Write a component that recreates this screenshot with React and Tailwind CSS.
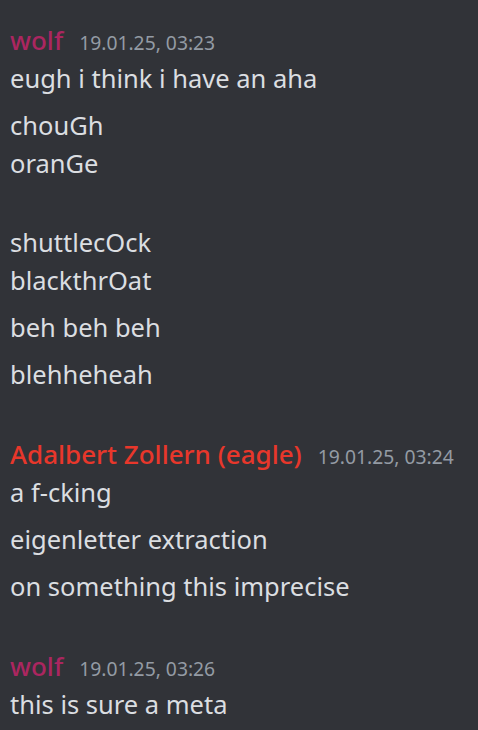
const wolf = "text-[#ab2660]";
const eagle = "text-[#e8372b]";

const groups = [
  {
    name: "wolf",
    color: wolf,
    time: "19.01.25, 03:23",
    messages: [
      ["eugh i think i have an aha"],
      ["chouGh", "oranGe", ""],
      ["shuttlecOck", "blackthrOat"],
      ["beh beh beh"],
      ["blehheheah"],
    ],
  },
  {
    name: "Adalbert Zollern (eagle)",
    color: eagle,
    time: "19.01.25, 03:24",
    messages: [["a f-cking"], ["eigenletter extraction"], ["on something this imprecise"]],
  },
  {
    name: "wolf",
    color: wolf,
    time: "19.01.25, 03:26",
    messages: [["this is sure a meta"]],
  },
];

function Group({ group }) {
  return (
    <div className="mt-[33px] first:mt-0">
      {group.messages.map((lines, i) => (
        <div key={i} className="pt-[5px] pb-[4px] px-[10px]">
          {i === 0 && (
            <div className="flex items-baseline gap-[16px] h-[38px] leading-[38px]">
              <span className={`text-[26px] font-medium ${group.color}`}>{group.name}</span>
              <span className="text-[19.3px] text-[#949ba4]">{group.time}</span>
            </div>
          )}
          {lines.map((line, j) =>
            line === "" ? (
              <div key={j} className="h-[32px]" />
            ) : (
              <div key={j} className="text-[25.5px] leading-[38px] text-[#dbdee1]">
                {line}
              </div>
            )
          )}
        </div>
      ))}
    </div>
  );
}

export default function App() {
  return (
    <div
      className="min-h-[730px] w-full bg-[#313338] pt-[16px] overflow-hidden"
      style={{ fontFamily: '"Noto Sans", sans-serif' }}
    >
      {groups.map((group, i) => (
        <Group key={i} group={group} />
      ))}
    </div>
  );
}
